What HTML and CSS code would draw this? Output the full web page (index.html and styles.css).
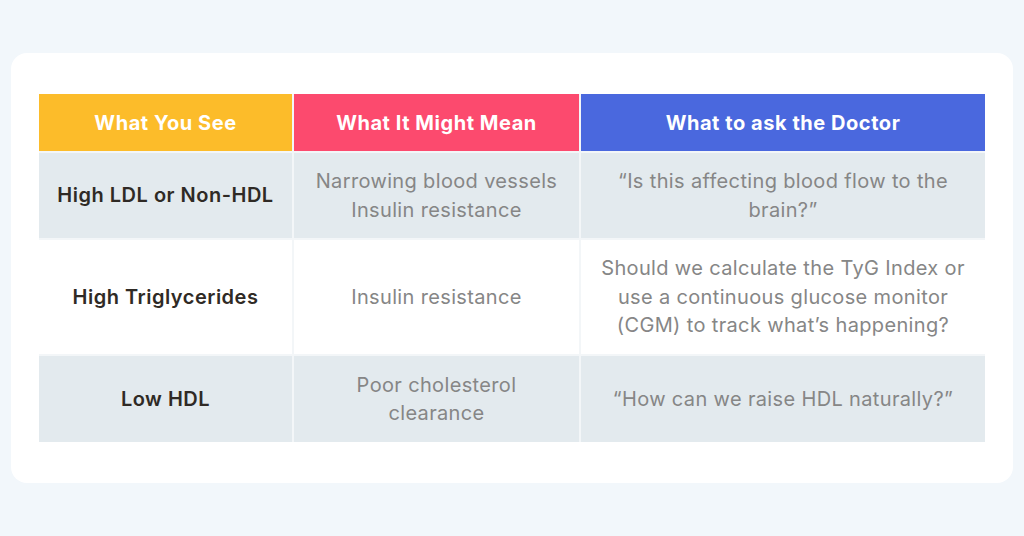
FILE: index.html
```html
<!DOCTYPE html>
<html>
<head>
<meta charset="utf-8">
<link rel="stylesheet" href="styles.css">
</head>
<body>
<div class="card">
  <table class="grid">
    <colgroup>
      <col class="c1"><col class="c2"><col class="c3">
    </colgroup>
    <thead>
      <tr class="head">
        <th class="h-yellow">What You See</th>
        <th class="h-pink">What It Might Mean</th>
        <th class="h-blue">What to ask the Doctor</th>
      </tr>
    </thead>
    <tbody>
      <tr class="row shaded r1">
        <td class="label">High LDL or Non-HDL</td>
        <td>Narrowing blood vessels<br>Insulin resistance</td>
        <td>“Is this affecting blood flow to the<br>brain?”</td>
      </tr>
      <tr class="row r2">
        <td class="label">High Triglycerides</td>
        <td>Insulin resistance</td>
        <td>Should we calculate the TyG Index or<br>use a continuous glucose monitor<br>(CGM) to track what’s happening?</td>
      </tr>
      <tr class="row shaded r3">
        <td class="label">Low HDL</td>
        <td>Poor cholesterol<br>clearance</td>
        <td>“How can we raise HDL naturally?”</td>
      </tr>
    </tbody>
  </table>
</div>
</body>
</html>
```
FILE: styles.css
```css
html, body {
  margin: 0;
  padding: 0;
}
body {
  background: #f2f7fb;
  font-family: "Inter", "Noto Sans", sans-serif;
  width: 1024px;
  height: 536px;
  overflow: hidden;
  padding: 53px 0 0 11px;
  box-sizing: border-box;
}
.card {
  width: 1002px;
  height: 430px;
  background: #ffffff;
  border-radius: 16px;
  padding: 41px 0 0 28px;
  box-sizing: border-box;
}
.grid {
  border-collapse: collapse;
  width: 946px;
  table-layout: fixed;
}
.c1 { width: 254px; }
.c2 { width: 287px; }
.c3 { width: 405px; }
.grid th, .grid td {
  border: 2px solid #f3f6f8;
  text-align: center;
  vertical-align: middle;
  padding: 0;
}
.grid tr:first-child th { border-top: none; }
.grid th:first-child, .grid td:first-child { border-left: none; }
.grid th:last-child, .grid td:last-child { border-right: none; }
.grid tbody tr:last-child td { border-bottom: none; }
.head th {
  height: 57px;
  color: #ffffff;
  font-size: 20px;
  font-weight: 700;
  letter-spacing: 0.55px;
}
.h-yellow { background: #fcbc2a; }
.h-pink { background: #fc4a6e; }
.h-blue { background: #4a68de; }
.row td {
  font-size: 20px;
  line-height: 28.5px;
  color: #868686;
  font-weight: 400;
  letter-spacing: 0.35px;
}
.row td.label {
  color: #2f2a25;
  font-weight: 600;
  letter-spacing: 0.5px;
}
.shaded td { background: #e3eaee; }
.r1 td { height: 85px; }
.r2 td { height: 114px; }
.r3 td { height: 86px; }
```
